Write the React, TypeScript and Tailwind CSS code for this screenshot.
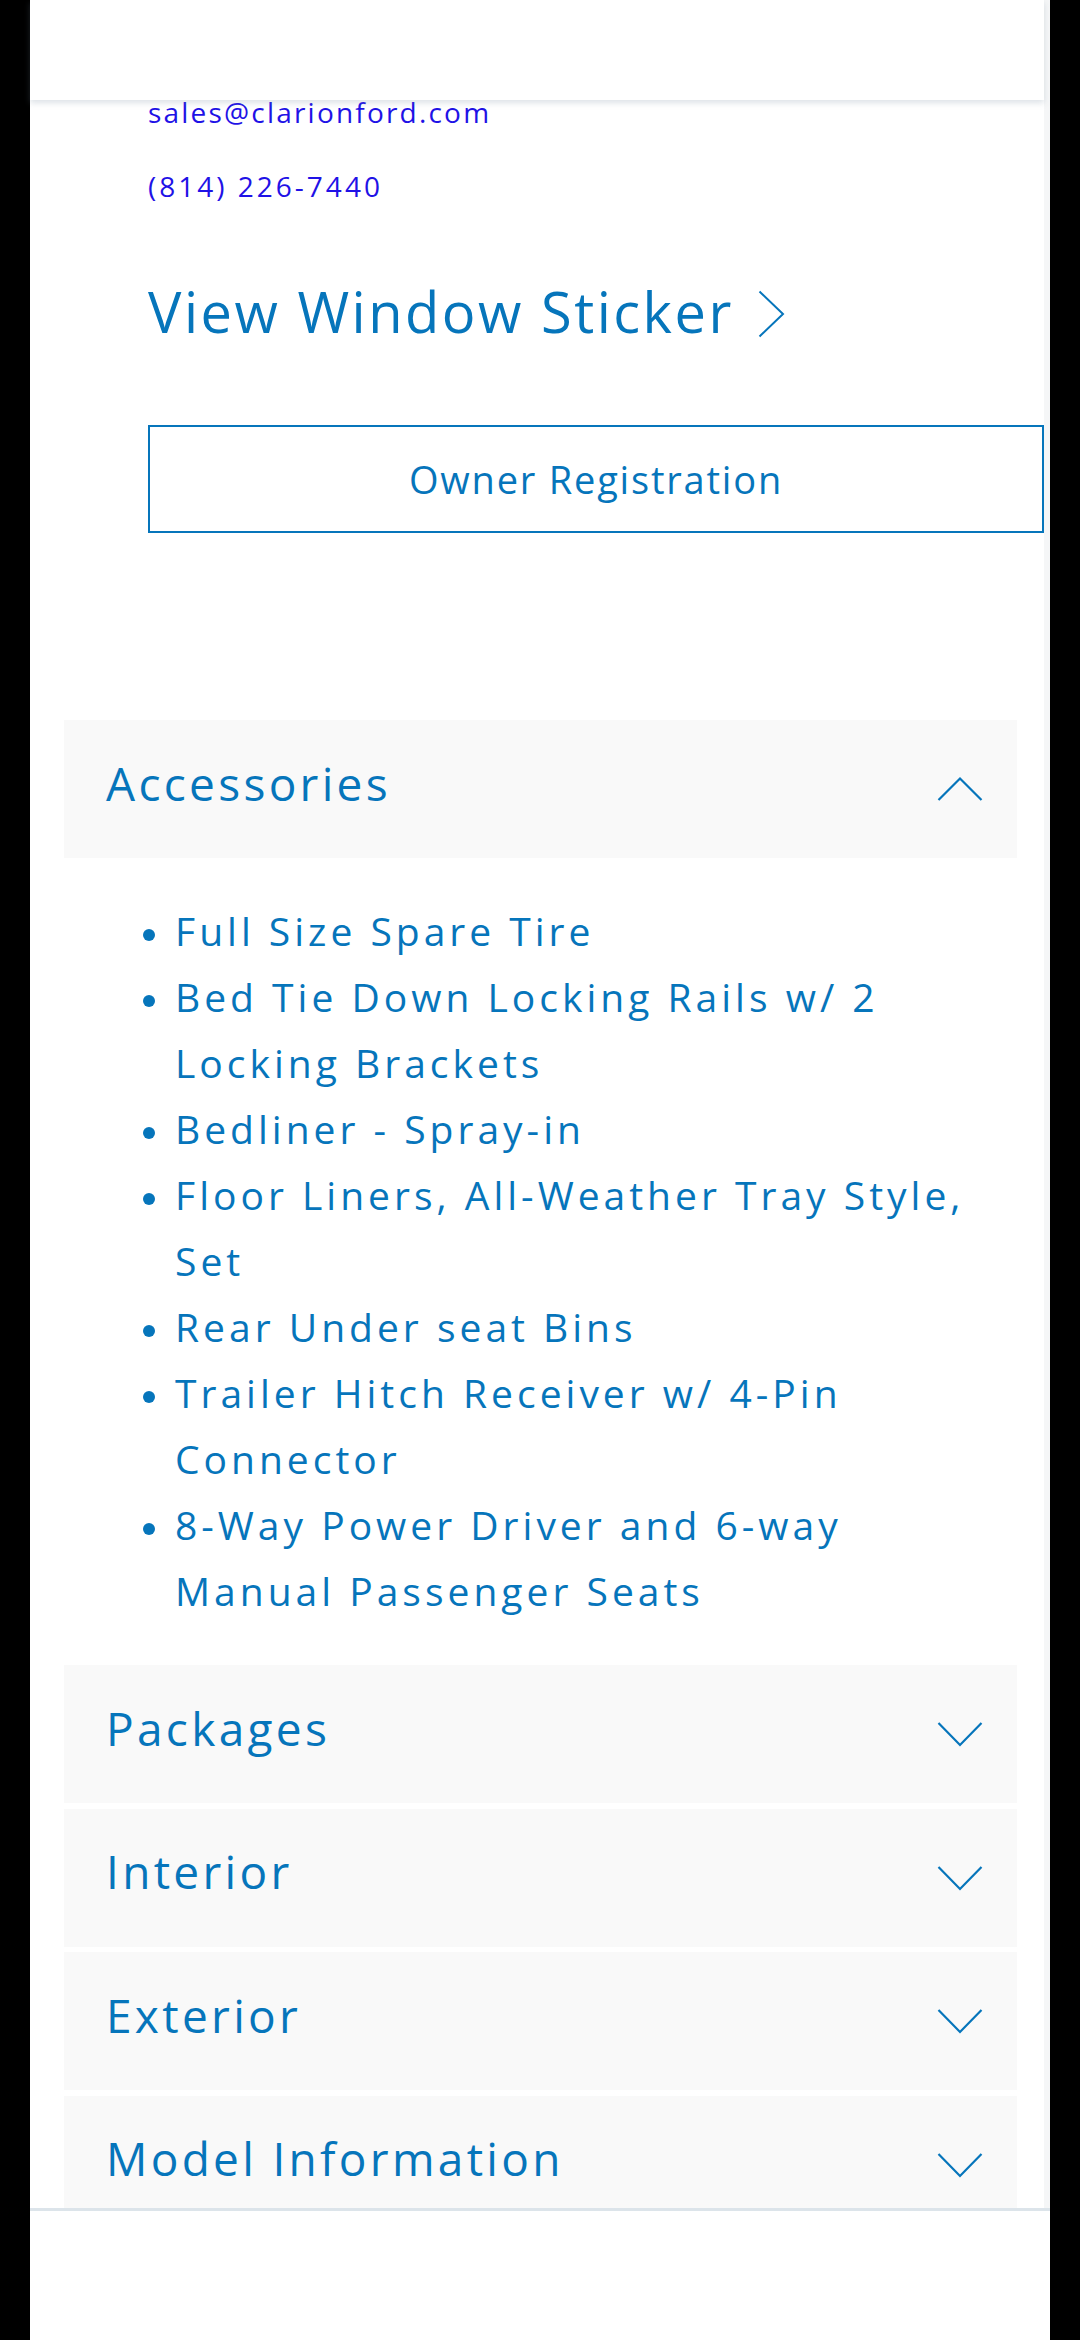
import React from "react";

const accessories = [
  "Full Size Spare Tire",
  "Bed Tie Down Locking Rails w/ 2 Locking Brackets",
  "Bedliner - Spray-in",
  "Floor Liners, All-Weather Tray Style, Set",
  "Rear Under seat Bins",
  "Trailer Hitch Receiver w/ 4-Pin Connector",
  "8-Way Power Driver and 6-way Manual Passenger Seats",
];

const sections = ["Packages", "Interior", "Exterior", "Model Information"];

function Chevron({ up }: { up?: boolean }) {
  return (
    <svg width="46" height="26" viewBox="0 0 46 26" fill="none" className="shrink-0">
      <polyline
        points={up ? "1.5,24 23,2.5 44.5,24" : "1.5,2 23,24 44.5,2"}
        stroke="#0675bb"
        strokeWidth="2.2"
      />
    </svg>
  );
}

function PanelHeader({ title, open }: { title: string; open?: boolean }) {
  return (
    <div className="flex h-[138px] items-center justify-between bg-[#f9f9f9] pl-[42px] pr-[34px]">
      <span className="pb-[13px] text-[46px] leading-[50px] tracking-[3.3px] text-[#0675bb]">{title}</span>
      <Chevron up={open} />
    </div>
  );
}

export default function App() {
  return (
    <div className="min-h-screen bg-black px-[30px] font-['Open_Sans',sans-serif]">
      <div className="min-h-screen border-r-[6px] border-[#f5f6f7] bg-white pb-[200px]">
        {/* top bar */}
        <div className="relative z-10 h-[100px] bg-white shadow-[0_3px_6px_rgba(120,140,160,0.25)]" />

        {/* contact */}
        <div className="pl-[118px]">
          <p className="text-[28px] leading-[24px] tracking-[2.2px] text-[#1f12e6]">sales@clarionford.com</p>
          <p className="mt-[50px] text-[28px] leading-[24px] tracking-[3px] text-[#1f12e6]">(814) 226-7440</p>

          <div className="mt-[81px] flex items-center gap-[24px]">
            <span className="text-[56px] leading-[64px] tracking-[2.5px] text-[#0675bb]">View Window Sticker</span>
            <svg width="27" height="48" viewBox="0 0 27 48" fill="none" className="mt-[6px]">
              <polyline points="1.5,1.5 25,24 1.5,46.5" stroke="#0675bb" strokeWidth="2" />
            </svg>
          </div>

          <button className="mt-[82px] flex h-[108px] w-[896px] items-center justify-center border-2 border-[#0675bb] text-[38px] leading-[48px] tracking-[1.8px] text-[#0675bb]">
            Owner Registration
          </button>
        </div>

        {/* accordion */}
        <div className="mt-[187px] pl-[34px] pr-[27px]">
          <PanelHeader title="Accessories" open />
          <ul className="pl-[79px] pr-[40px] pt-[40px] pb-[41px]">
            {accessories.map((a) => (
              <li key={a} className="flex">
                <span className="mt-[31px] h-[12px] w-[12px] shrink-0 rounded-full bg-[#0675bb]" />
                <span className="ml-[20px] text-[39px] leading-[66px] tracking-[4px] text-[#0675bb]">{a}</span>
              </li>
            ))}
          </ul>
          <div className="flex flex-col gap-[5.5px]">
            {sections.map((s) => (
              <PanelHeader key={s} title={s} />
            ))}
          </div>
        </div>
      </div>

      {/* bottom bar */}
      <div className="fixed bottom-0 left-[30px] right-[30px] h-[132px] border-t-[3px] border-[#dce4ea] bg-white" />
    </div>
  );
}
